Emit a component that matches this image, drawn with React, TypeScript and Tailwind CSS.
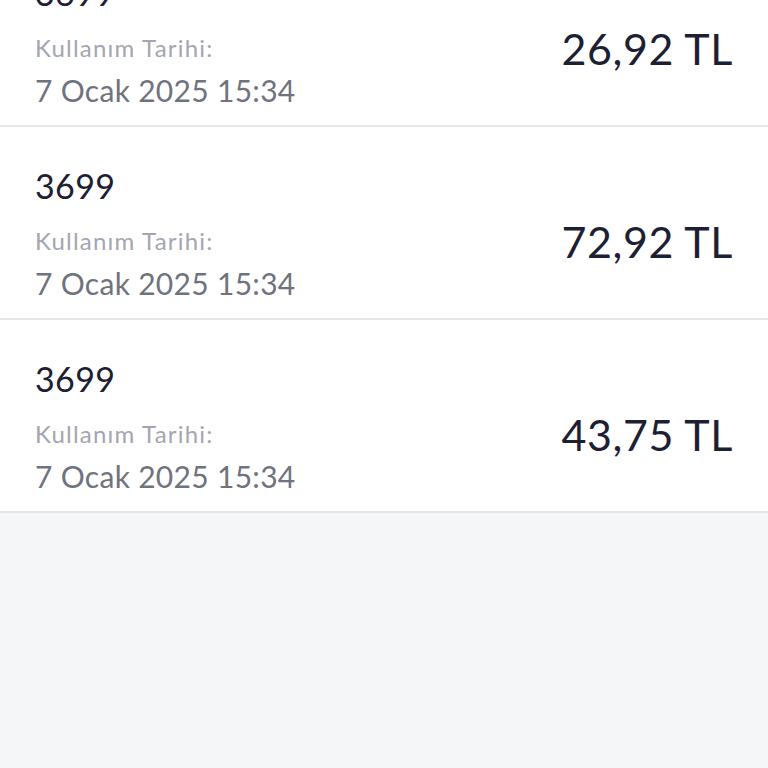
const usages = [
  { code: '3699', date: '7 Ocak 2025 15:34', amount: '26,92 TL' },
  { code: '3699', date: '7 Ocak 2025 15:34', amount: '72,92 TL' },
  { code: '3699', date: '7 Ocak 2025 15:34', amount: '43,75 TL' },
];

const UsageRow = ({ code, date, amount }: { code: string; date: string; amount: string }) => (
  <div className="flex items-start justify-between bg-white px-[35px] pt-[39px] pb-[15px] border-b-2 border-[#e5e6ea]">
    <div className="flex flex-col">
      <span className="text-[34px] leading-[40px] tracking-[0.4px] text-[#1d2033]">{code}</span>
      <span className="mt-[19px] text-[24px] leading-[32px] tracking-[1.2px] text-[#a3a6b0]">Kullanım Tarihi:</span>
      <span className="mt-[6px] text-[30px] leading-[40px] tracking-[0.3px] text-[#70737d]">{date}</span>
    </div>
    <span className="mt-[50px] text-[43px] leading-[52px] tracking-[0.6px] text-[#1d2033]">{amount}</span>
  </div>
);

export default function App() {
  return (
    <div className="h-screen overflow-hidden bg-[#f5f6f8] font-['Lato',sans-serif]">
      <div className="-mt-[66px]">
        {usages.map((u, i) => (
          <UsageRow key={i} {...u} />
        ))}
      </div>
    </div>
  );
}
